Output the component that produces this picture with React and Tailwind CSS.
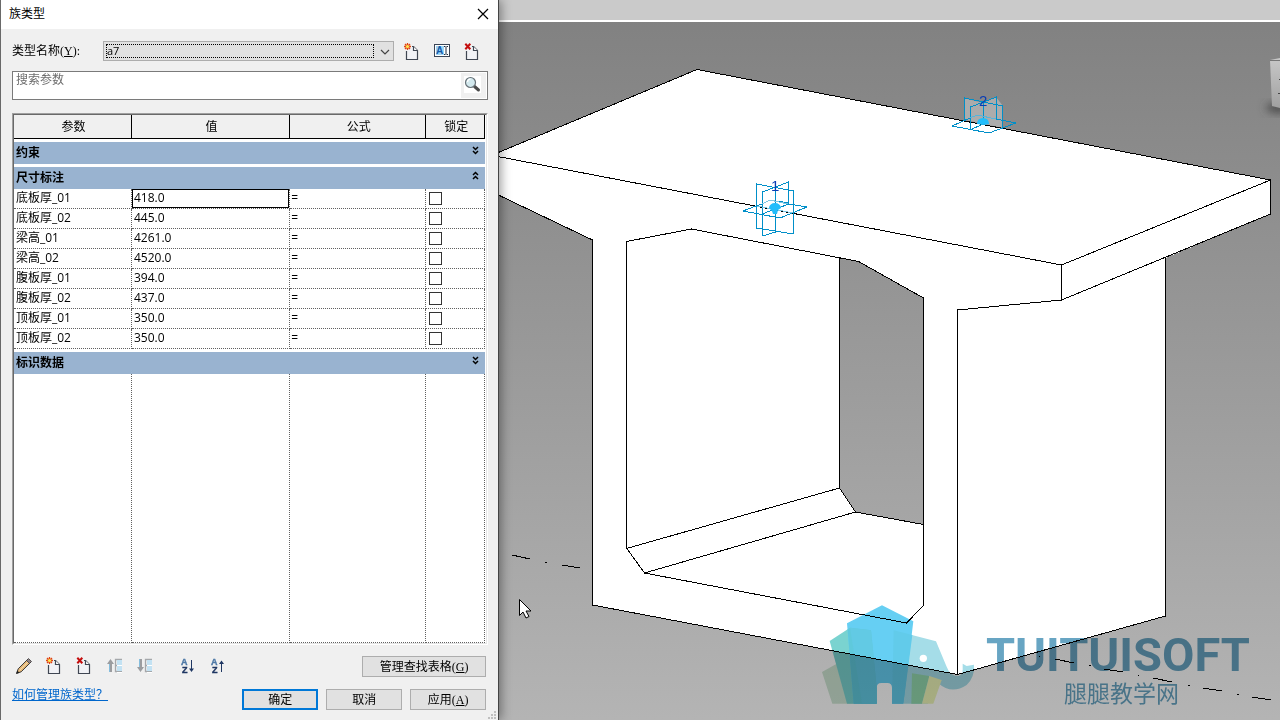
import React, { useState } from 'react';
import clsx from 'clsx';

const PARAMETERS = [
  { name: '底板厚_01', value: '418.0' },
  { name: '底板厚_02', value: '445.0' },
  { name: '梁高_01', value: '4261.0' },
  { name: '梁高_02', value: '4520.0' },
  { name: '腹板厚_01', value: '394.0' },
  { name: '腹板厚_02', value: '437.0' },
  { name: '顶板厚_01', value: '350.0' },
  { name: '顶板厚_02', value: '350.0' }
];

const COLUMNS = ['参数', '值', '公式', '锁定'];

/* ---------- Icons ---------- */

function Page() {
  return (
    <g strokeWidth="1.2">
      <path d="M2.5 7v9.5h11v-9l-4-4H6.5z" fill="#f1f2f6" />
      <path d="M2.5 8v8.500h11v-9l-4-4H8" fill="none" stroke="#3f4652" />
      <path d="M9.500 3.500v4h4" fill="#fff" stroke="#3f4652" />
    </g>
  );
}

function NewIcon() {
  return (
    <svg width="16" height="17" viewBox="0 0 16 17">
      <Page />
      <circle cx="3.500" cy="3.500" r="3.800" fill="#f0f0f0" />
      <path d="M3.500 0v7M0 3.500h7M1 1l5 5M6 1L1 6" stroke="#e0430f" strokeWidth="1.300" />
      <circle cx="3.500" cy="3.500" r="1.600" fill="#ffe650" />
    </svg>
  );
}

function DeleteIcon() {
  return (
    <svg width="16" height="17" viewBox="0 0 16 17">
      <Page />
      <path d="M0 0h7.500v7H0z" fill="#f0f0f0" />
      <path d="M1.300.800l5 5.400M6.300.800l-5 5.400" stroke="#c40d0d" strokeWidth="2" />
    </svg>
  );
}

function RenameIcon() {
  return (
    <svg width="16" height="17" viewBox="0 0 16 17">
      <rect x=".5" y="1.500" width="15" height="12" fill="#fff" stroke="#3a4556" />
      <rect x="2" y="3" width="8" height="9" fill="#9fd3f3" />
      <text x="2" y="11" fontSize="10" fontWeight="700" fill="#1259a8" fontFamily="Liberation Sans, sans-serif">A</text>
      <path d="M10 3.500h1.500M12.500 3.500H14M10 11.500h1.500M12.500 11.500H14M12 4v7" stroke="#1d2b3e" fill="none" />
    </svg>
  );
}

function SearchIcon() {
  return (
    <svg width="17" height="17" viewBox="0 0 17 17">
      <path d="M0 0h17v17H0z" fill="#fff" />
      <path d="M10.500 10.500l4 3.500" stroke="#4a4a4a" strokeWidth="3" strokeLinecap="round" />
      <circle cx="6.500" cy="6.500" r="5" fill="#d3e9ee" stroke="#687278" strokeWidth="1.200" />
      <path d="M3.500 6a3 3 0 0 1 3-2.800" stroke="#fff" fill="none" strokeWidth="1.300" />
    </svg>
  );
}

function PencilIcon() {
  return (
    <svg width="16" height="16" viewBox="0 0 16 16">
      <path d="M.7 15.300l1.500-4.500L12 1l3 3-9.800 9.800z" fill="#e5b877" stroke="#3c3a3a" />
      <path d="M3.800 12.300L13 3" stroke="#f6dcb0" />
      <path d="M10.500 2.500l3 3 2-2-3-3z" fill="#8d8286" stroke="#3c3a3a" strokeWidth=".8" />
      <path d="M0 16l1.300-3.500 2.200 2.200z" fill="#222" />
    </svg>
  );
}

function MoveIcon({ down }) {
  return (
    <svg width="16" height="16" viewBox="0 0 16 16">
      <path d={down ? 'M3 1h3v8h2l-3.500 5L1 9h2z' : 'M3 14h3V6h2L4.500 1 1 6h2z'} fill="#9b9da0" />
      <path d={down ? 'M3 1h1v8H3z' : 'M3 6h1v8H3z'} fill="#85bddd" />
      <path d="M16 1.500H9.500v12H16M9.500 7.500H16" fill="none" stroke="#a5a8ab" strokeWidth="1.300" />
      <path d="M11 2h5v5h-5zM11 8h5v5h-5z" fill="#c3e2f3" />
      <path d="M11 7.500h5M11 14.500h5" stroke="#fff" />
    </svg>
  );
}

function SortIcon({ up }) {
  return (
    <svg width="16" height="16" viewBox="0 0 16 16" fontFamily="Liberation Sans, sans-serif" fontWeight="700" fontSize="9">
      <text x="1" y="7" fill="#4d78a6" stroke="#4d78a6" strokeWidth=".4">A</text>
      <text x="2" y="15" fill="#1f3763" stroke="#1f3763" strokeWidth=".4">Z</text>
      <path d={up ? 'M11.500 14V3' : 'M11.500 2v11'} stroke="#1f3763" />
      <path d={up ? 'M9 6l2.500-3.500L14 6z' : 'M9 10.500l2.500 3.500 2.500-3.500z'} fill="#1f3763" />
    </svg>
  );
}

function Chevrons({ up }) {
  return (
    <svg width="7" height="9" viewBox="0 0 7 9" fill="none" stroke="#000" strokeWidth="1.500">
      <path d={up ? 'M1 4l2.500-2.500L6 4M1 8l2.500-2.500L6 8' : 'M1 1l2.500 2.500L6 1M1 5l2.500 2.500L6 5'} />
    </svg>
  );
}

/* ---------- Dialog parts ---------- */

function IconButton({ label, children, className }) {
  return (
    <button type="button" aria-label={label} className={clsx('flex w-4 shrink-0 items-center justify-center', className)}>
      {children}
    </button>
  );
}

function PushButton({ children, primary, className }) {
  return (
    <button
      type="button"
      className={clsx(
        'h-[21px] bg-[#e1e1e1] text-xs leading-4 text-black',
        primary ? 'border-2 border-[#0078d7]' : 'border border-[#adadad]',
        className || 'w-[76px]'
      )}
    >
      {children}
    </button>
  );
}

function SectionRow({ title, open }) {
  return (
    <tr>
      <th colSpan={4} scope="colgroup" className="border-t-[3px] border-white p-0">
        <button type="button" aria-expanded={!!open} className="flex h-[22px] w-full justify-between bg-[#99b3d0] pr-[6px] pl-[2px] text-xs leading-[22px] font-bold">
          <span>{title}</span>
          <span className="pt-1"><Chevrons up={open} /></span>
        </button>
      </th>
    </tr>
  );
}

function ParameterTable() {
  const [rows, setRows] = useState(PARAMETERS);

  const setValue = (index, value) =>
    setRows(rows.map((row, i) => (i === index ? { ...row, value } : row)));

  return (
    <div className="mt-[13px] flex flex-1 flex-col border border-t-[#a0a0a0] border-r-white border-b-white border-l-[#a0a0a0]">
      <div className="flex flex-1 flex-col border border-t-[#696969] border-r-[#e3e3e3] border-b-[#e3e3e3] border-l-[#696969] bg-white pr-px">
        <table className="w-full table-fixed border-separate border-spacing-0 text-xs leading-4">
          <colgroup>
            <col className="w-[118px]" />
            <col />
            <col className="w-[136px]" />
            <col className="w-[59px]" />
          </colgroup>
          <thead>
            <tr>
              {COLUMNS.map((title) => (
                <th key={title} scope="col" className="h-6 border-r border-b border-black bg-[#f0f0f0] p-0 pl-[2px] text-center font-normal">
                  {title}
                </th>
              ))}
            </tr>
          </thead>
          <tbody>
            <SectionRow title="约束" />
            <SectionRow title="尺寸标注" open />
            {rows.map((row, idx) => (
              <tr key={row.name}>
                <td className="h-5 border-r border-b border-dotted border-[#606060] p-0 pb-[2px] pl-[2px]">{row.name}</td>
                <td className="h-5 border-r border-b border-dotted border-[#606060] p-0">
                  <input
                    type="text"
                    aria-label={row.name}
                    value={row.value}
                    onChange={(e) => setValue(idx, e.target.value)}
                    className={clsx('block h-[19px] w-full border px-px pb-[2px] outline-none', idx === 0 ? 'border-black' : 'border-transparent')}
                  />
                </td>
                <td className="h-5 border-r border-b border-dotted border-[#606060] p-0 pb-[2px] pl-px">=</td>
                <td className="h-5 border-r border-b border-dotted border-[#606060] p-0 pl-[3px]">
                  <input
                    type="checkbox"
                    aria-label={`锁定 ${row.name}`}
                    className="block size-[13px] appearance-none border border-[#333] bg-white checked:bg-[#333]"
                  />
                </td>
              </tr>
            ))}
            <SectionRow title="标识数据" />
          </tbody>
        </table>
        {/* Empty part of the grid below the last group */}
        <div className="grid flex-1 grid-cols-[118px_1fr_136px_59px]">
          {COLUMNS.map((title) => (
            <div key={title} className="border-r border-b border-dotted border-[#606060]" />
          ))}
        </div>
      </div>
    </div>
  );
}

function FamilyTypesDialog() {
  return (
    <section
      aria-label="族类型"
      className="relative z-10 flex w-[39%] shrink-0 flex-col border-x border-l-[#696969] border-r-[#444] bg-[#f0f0f0] shadow-[2px_0_10px_rgba(0,0,0,0.4)]"
    >
      <header className="flex h-[29px] shrink-0 items-center justify-between bg-white pr-[9px] pb-[2px] pl-2">
        <h1 className="text-xs leading-4">族类型</h1>
        <button type="button" aria-label="关闭">
          <svg width="12" height="12" viewBox="0 0 12 12" stroke="#000" strokeWidth="1.200">
            <path d="M1 1l10 10M11 1L1 11" />
          </svg>
        </button>
      </header>

      <div className="flex flex-1 flex-col pt-3 pr-[10px] pb-[10px] pl-[11px]">
        <div className="flex h-5 items-center pr-2">
          <label htmlFor="type-name" className="w-[91px] shrink-0 text-xs leading-4">
            类型名称<span className="font-['Liberation_Serif',serif]">(<u>Y</u>):</span>
          </label>
          <div className="flex h-5 min-w-0 flex-1 items-center border border-[#adadad] bg-[#e1e1e1] pl-[2px]">
            <select id="type-name" className="h-[14px] min-w-0 flex-1 appearance-none border border-dotted border-black text-[11px] leading-3 outline-none">
              <option>a7</option>
            </select>
            <svg width="19" height="18" viewBox="0 0 19 18" fill="none" stroke="#444" strokeWidth="1.200">
              <path d="M7 8l4 4 4-4" />
            </svg>
          </div>
          <div className="flex shrink-0 gap-[14px] pl-[10px]">
            <IconButton label="新建类型"><NewIcon /></IconButton>
            <IconButton label="重命名类型"><RenameIcon /></IconButton>
            <IconButton label="删除类型"><DeleteIcon /></IconButton>
          </div>
        </div>

        <div className="mt-[10px] flex h-[29px] shrink-0 border border-[#7a7a7a] bg-white p-px">
          <input
            type="text"
            aria-label="搜索参数"
            placeholder="搜索参数"
            className="h-[14px] min-w-0 flex-1 pl-[2px] text-xs leading-[14px] outline-none placeholder:text-[#6d6d6d]"
          />
          <button type="button" aria-label="搜索" className="flex w-[25px] items-center justify-center bg-[#f0f0f0] pr-[2px] pb-[2px]">
            <SearchIcon />
          </button>
        </div>

        <ParameterTable />

        <div className="mt-[11px] flex h-[21px] items-center gap-[14px] pr-[2px] pl-1">
          <div className="flex gap-[14px] pb-[2px]">
            <IconButton label="编辑参数"><PencilIcon /></IconButton>
            <IconButton label="新建参数"><NewIcon /></IconButton>
            <IconButton label="删除参数"><DeleteIcon /></IconButton>
            <IconButton label="上移"><MoveIcon /></IconButton>
            <IconButton label="下移"><MoveIcon down /></IconButton>
            <IconButton label="升序排序" className="ml-[14px]"><SortIcon /></IconButton>
            <IconButton label="降序排序"><SortIcon up /></IconButton>
          </div>
          <PushButton className="ml-auto w-[124px]">
            管理查找表格<span className="font-['Liberation_Serif',serif]">(<u>G</u>)</span>
          </PushButton>
        </div>

        <div className="mt-3 flex gap-2 pr-[2px]">
          <a href="#help" className="mr-auto self-start text-xs leading-3 whitespace-pre text-[#0066cc] underline">如何管理族类型？</a>
          <PushButton primary>确定</PushButton>
          <PushButton>取消</PushButton>
          <PushButton>
            应用<span className="font-['Liberation_Serif',serif]">(<u>A</u>)</span>
          </PushButton>
        </div>
      </div>

      <svg className="absolute right-px bottom-0" width="9" height="9" viewBox="0 0 9 9" fill="#bfbfbf">
        <path d="M6 0h2v2H6zM6 3h2v2H6zM3 3h2v2H3zM6 6h2v2H6zM3 6h2v2H3zM0 6h2v2H0z" />
      </svg>
    </section>
  );
}

/* ---------- Model view ---------- */

function Watermark() {
  return (
    <g className="mix-blend-multiply">
      <g transform="translate(800 590) scale(.33333)">
        <path d="M66 246l71-40 23 135H97z" fill="#cfe6d4" />
        <path d="M89 153l61-40 63 8 17 220h-89z" fill="#7ad3d0" />
        <path d="M281 121l127 33 32 76q10 28 35 28 13-3 13-18v-19l12 7 22-4q3 36-22 61-45 30-85-5l-27-22-4 83h-74z" fill="#a5dde8" />
        <path d="M141 100l105-54 94 48-30 247h-34v-48q0-14-14-14h-18q-14 0-14 14v48h-69z" fill="#66cff3" />
        <path d="M143 118l7-5 63 8 17 172v48h-69z" fill="#5fc9dc" />
        <path d="M150 113l63 8 17 172v48h-44z" fill="#62cae4" />
        <path d="M281 121l56 14-27 206h-34z" fill="#62cbea" />
        <path d="M336 250l52 8-22 83h-32z" fill="#93d8ae" />
        <path d="M388 258l37 12-25 71h-34z" fill="#ecf5b8" />
        <circle cx="370" cy="205" r="11" fill="#fff" />
      </g>
      <text x="986" y="671" fontSize="47" fontWeight="700" fill="#68a5c3" fontFamily="Roboto, sans-serif">TUITUISOFT</text>
      <text x="1064" y="702" fontSize="23" fill="#68a5c3" fontFamily="Noto Sans CJK SC, sans-serif">腿腿教学网</text>
    </g>
  );
}

function ModelView() {
  return (
    <svg className="w-full flex-1" role="img" aria-label="箱梁三维视图">
      <defs>
        <linearGradient id="cube" x1="0" y1="0" x2="0" y2="1">
          <stop offset="0" stopColor="#c8c8c8" />
          <stop offset="1" stopColor="#a0a0a0" />
        </linearGradient>
        <linearGradient id="opening" x1="0" y1="0" x2="0" y2="1">
          <stop offset="0" stopColor="#939393" />
          <stop offset="1" stopColor="#a6a6a6" />
        </linearGradient>
        <filter id="soft" x="-50%" y="-50%" width="200%" height="200%">
          <feGaussianBlur stdDeviation="4" />
        </filter>
      </defs>
      <g transform="translate(-499 -22)">
        {/* View cube */}
        <ellipse cx="1278" cy="108" rx="12" ry="5" fill="#4c4c4c" filter="url(#soft)" />
        <path d="M1270 60l10-2v50l-8-2z" fill="url(#cube)" />
        <path d="M1270 60h10v1h-10z" fill="#777" />
        <path d="M1279 79h1v1h-1zM1278 93h2v1h-2z" fill="#444" />

        {/* Box girder */}
        <g fill="none" stroke="#000" shapeRendering="crispEdges">
          <path d="M490 156L697 69.500l573.500 110.500v34L1165.500 258v358L957.500 674.500 592.500 605V240L490 191z" fill="#fff" stroke="none" />
          <path d="M490 156L697 69.500l573.500 110.500v34M1165.500 258v358L957.500 674.500 592.500 605V240L490 191" />
          <path d="M839.500 257.500l19 4L923.500 298v226.500L855.500 512l-16-24z" fill="url(#opening)" stroke="none" />
          <path d="M490 155l571.500 110L1270.500 180M1061.500 265v35L957.500 310v364M1061.500 300L1270.500 214" />
          <path d="M626.500 548V241.500L691.500 229l167 32.500L923.500 298v307.500L906.500 623 644.500 573z" />
          <path d="M626.500 548.500L839.500 488V258M839.500 488l16 24L644.500 573M855.500 512l68 12.500" />
          <path d="M512 555l18 4M545 562h2M562 565l18 3" />
          <path d="M1039 656h1M1055 659l19 4M1089 665.500h2M1104 669l19 3M1138 675.500h1M1153 678l19 4M1188 685.500h2M1203 688l19 3M1237 694.500h2M1252 697l19 3" />
        </g>

        {/* Adaptive point 1 */}
        <g fill="none" stroke="#008fc9" shapeRendering="crispEdges">
          <path d="M756.500 184l37 7v43l-37-6zM762.500 236v-44l26-10v22M762.500 236l13-4v-42M743 211l13-5 6-2M762 204l8-4 19 3M789 204l18 3-27 11-37-7M762 214l27-10" />
          <path d="M757 206l36 7M762 204l8-4 18 4" stroke="#7cc7e4" />
        </g>
        <path d="M769 208a6 5 0 0 1 12 0l-3 2-1 4h-4l-1-3z" fill="#22bdfb" />
        <text x="771" y="191" fontSize="15" fill="#0a3cb4" fontFamily="Liberation Sans, sans-serif">1</text>

        {/* Adaptive point 2 */}
        <path d="M964 98l19 5 13-6 7 9v22l-33-7-6-1z" fill="#fff" fillOpacity=".3" />
        <g fill="none" stroke="#008fc9" shapeRendering="crispEdges">
          <path d="M964.500 121V98l38 8v21M970.500 130v-23l26-10v23M983.500 103v20M970 118l-18 8 37 7 27-10-20-4M970 130l13-6" />
          <path d="M970 118l7-3 19 4" stroke="#55b5dc" />
        </g>
        <path d="M977 124q0-6 6-6t6 6l-5 1z" fill="#22bdfb" />
        <text x="979" y="106" fontSize="15" fill="#0a3cb4" fontFamily="Liberation Sans, sans-serif">2</text>

        <Watermark />

        {/* Mouse pointer */}
        <path d="M519.500 599.500v16l3.500-3.500 3 6 3-1.500-3-5.500h5z" fill="#fff" stroke="#000" />
      </g>
    </svg>
  );
}

export default function App() {
  return (
    <div className="flex min-h-screen overflow-hidden bg-[#808080] font-['Open_Sans','Noto_Sans_CJK_SC',sans-serif] text-black">
      <FamilyTypesDialog />
      <main className="flex min-w-0 flex-1 flex-col bg-linear-to-b from-[#808080] to-[#b4b4b4]">
        <div className="h-[22px] shrink-0 border-b-2 border-white bg-[#cacaca]" />
        <ModelView />
      </main>
    </div>
  );
}
